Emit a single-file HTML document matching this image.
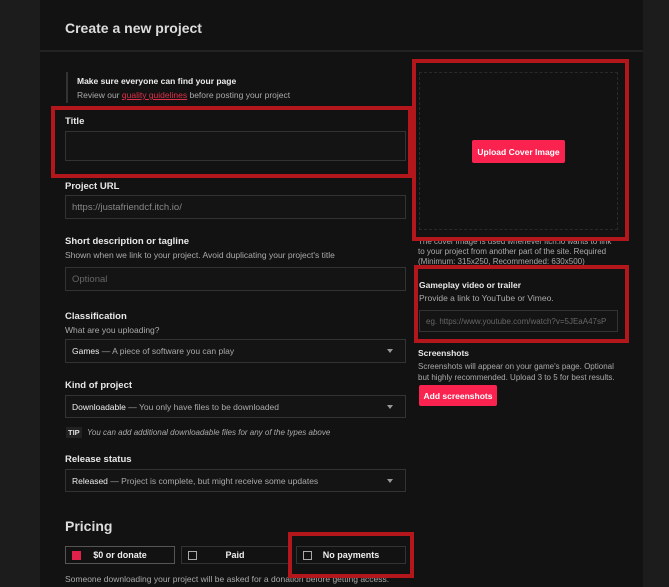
<!DOCTYPE html>
<html><head><meta charset="utf-8"><style>
*{box-sizing:border-box;margin:0;padding:0}
body{width:669px;height:587px;background:#1c1c1c;font-family:"Liberation Sans",sans-serif;position:relative;overflow:hidden;color:#ddd}
.panel{position:absolute;left:40px;top:0;width:603px;height:587px;background:#121212}
.hdr{position:absolute;left:40px;top:0;width:603px;height:52px;border-bottom:2px solid #222}
.a{position:absolute;white-space:nowrap}
.lbl{font-size:9.5px;font-weight:bold;color:#e8e8e8}
.sub{font-size:8.5px;color:#aaa}
.inp{position:absolute;background:#141414;border:1px solid #333;font-size:9.5px;color:#888;padding-left:6px;display:flex;align-items:center}
.sel{color:#ddd;font-size:8.5px}
.sel b{font-weight:normal;color:#eee}
.sel span{color:#aaa}
.arr{position:absolute;right:12px;top:50%;margin-top:-2px;border:3px solid transparent;border-top:4px solid #999}
.red{position:absolute;border:4px solid #b3171b}
.btn{position:absolute;background:#fa2350;color:#fff;font-size:8.5px;font-weight:bold;border-radius:2px;display:flex;align-items:center;justify-content:center}
.opt{position:absolute;top:546px;height:18px;border:1px solid #333;font-size:9px;font-weight:bold;color:#eee;display:flex;align-items:center;justify-content:center}
.cb{position:absolute;left:6px;top:4px;width:9px;height:9px;border:1px solid #aaa}
</style></head><body>
<div class="panel"></div><div class="hdr"></div>
<div class="a" style="left:65px;top:20px;font-size:14px;font-weight:bold;color:#ddd">Create a new project</div>
<div class="a" style="left:66px;top:72px;width:2px;height:31px;background:#333"></div>
<div class="a" style="left:77px;top:76px;font-size:8.5px;font-weight:bold;color:#eee">Make sure everyone can find your page</div>
<div class="a sub" style="left:77px;top:90px">Review our <span style="color:#e0314a;text-decoration:underline">quality guidelines</span> before posting your project</div>

<div class="a lbl" style="left:65px;top:116px">Title</div>
<div class="inp" style="left:65px;top:131px;width:341px;height:30px"></div>
<div class="a lbl" style="left:65px;top:181px">Project URL</div>
<div class="inp" style="left:65px;top:195px;width:341px;height:24px">https://justafriendcf.itch.io/</div>
<div class="a lbl" style="left:65px;top:236px">Short description or tagline</div>
<div class="a sub" style="left:65px;top:250px">Shown when we link to your project. Avoid duplicating your project's title</div>
<div class="inp" style="left:65px;top:267px;width:341px;height:24px;color:#666">Optional</div>

<div class="a lbl" style="left:65px;top:311px">Classification</div>
<div class="a sub" style="left:65px;top:325px">What are you uploading?</div>
<div class="inp sel" style="left:65px;top:339px;width:341px;height:24px"><b>Games</b>&nbsp;<span>— A piece of software you can play</span><i class="arr"></i></div>
<div class="a lbl" style="left:65px;top:380px">Kind of project</div>
<div class="inp sel" style="left:65px;top:395px;width:341px;height:23px"><b>Downloadable</b>&nbsp;<span>— You only have files to be downloaded</span><i class="arr"></i></div>
<div class="a" style="left:66px;top:427px;background:#222;color:#ddd;font-size:7.5px;font-weight:bold;padding:1px 2px">TIP</div>
<div class="a" style="left:87px;top:428px;font-size:8px;font-style:italic;color:#aaa">You can add additional downloadable files for any of the types above</div>
<div class="a lbl" style="left:65px;top:454px">Release status</div>
<div class="inp sel" style="left:65px;top:469px;width:341px;height:23px"><b>Released</b>&nbsp;<span>— Project is complete, but might receive some updates</span><i class="arr"></i></div>

<div class="a" style="left:65px;top:518px;font-size:14px;font-weight:bold;color:#ddd">Pricing</div>
<div class="opt" style="left:65px;width:110px;border-color:#555"><div class="cb" style="background:#e0214a;border-color:#e0214a"></div>$0 or donate</div>
<div class="opt" style="left:181px;width:108px;font-weight:bold"><div class="cb"></div>Paid</div>
<div class="opt" style="left:296px;width:110px"><div class="cb"></div>No payments</div>
<div class="a sub" style="left:65px;top:574px;font-size:8.5px">Someone downloading your project will be asked for a donation before getting access.</div>

<div class="a" style="left:419px;top:72px;width:199px;height:158px;border:1px dashed #2a2a2a"></div>
<div class="btn" style="left:472px;top:140px;width:93px;height:23px">Upload Cover Image</div>
<div class="a sub" style="left:418px;top:237px;line-height:10px;font-size:8px">The cover image is used whenever itch.io wants to link<br>to your project from another part of the site. Required<br>(Minimum: 315x250, Recommended: 630x500)</div>
<div class="a lbl" style="left:419px;top:280px;font-size:8.5px">Gameplay video or trailer</div>
<div class="a sub" style="left:419px;top:293px">Provide a link to YouTube or Vimeo.</div>
<div class="inp" style="left:419px;top:310px;width:199px;height:22px;font-size:8px;color:#666">eg. https://www.youtube.com/watch?v=5JEaA47sP</div>
<div class="a lbl" style="left:418px;top:348px;font-size:8.5px">Screenshots</div>
<div class="a sub" style="left:418px;top:361px;line-height:11px;font-size:8px">Screenshots will appear on your game's page. Optional<br>but highly recommended. Upload 3 to 5 for best results.</div>
<div class="btn" style="left:419px;top:385px;width:78px;height:21px">Add screenshots</div>

<div class="red" style="left:51px;top:106px;width:361px;height:72px"></div>
<div class="red" style="left:412px;top:59px;width:217px;height:182px"></div>
<div class="red" style="left:414px;top:265px;width:215px;height:78px"></div>
<div class="red" style="left:288px;top:532px;width:126px;height:46px"></div>
</body></html>
